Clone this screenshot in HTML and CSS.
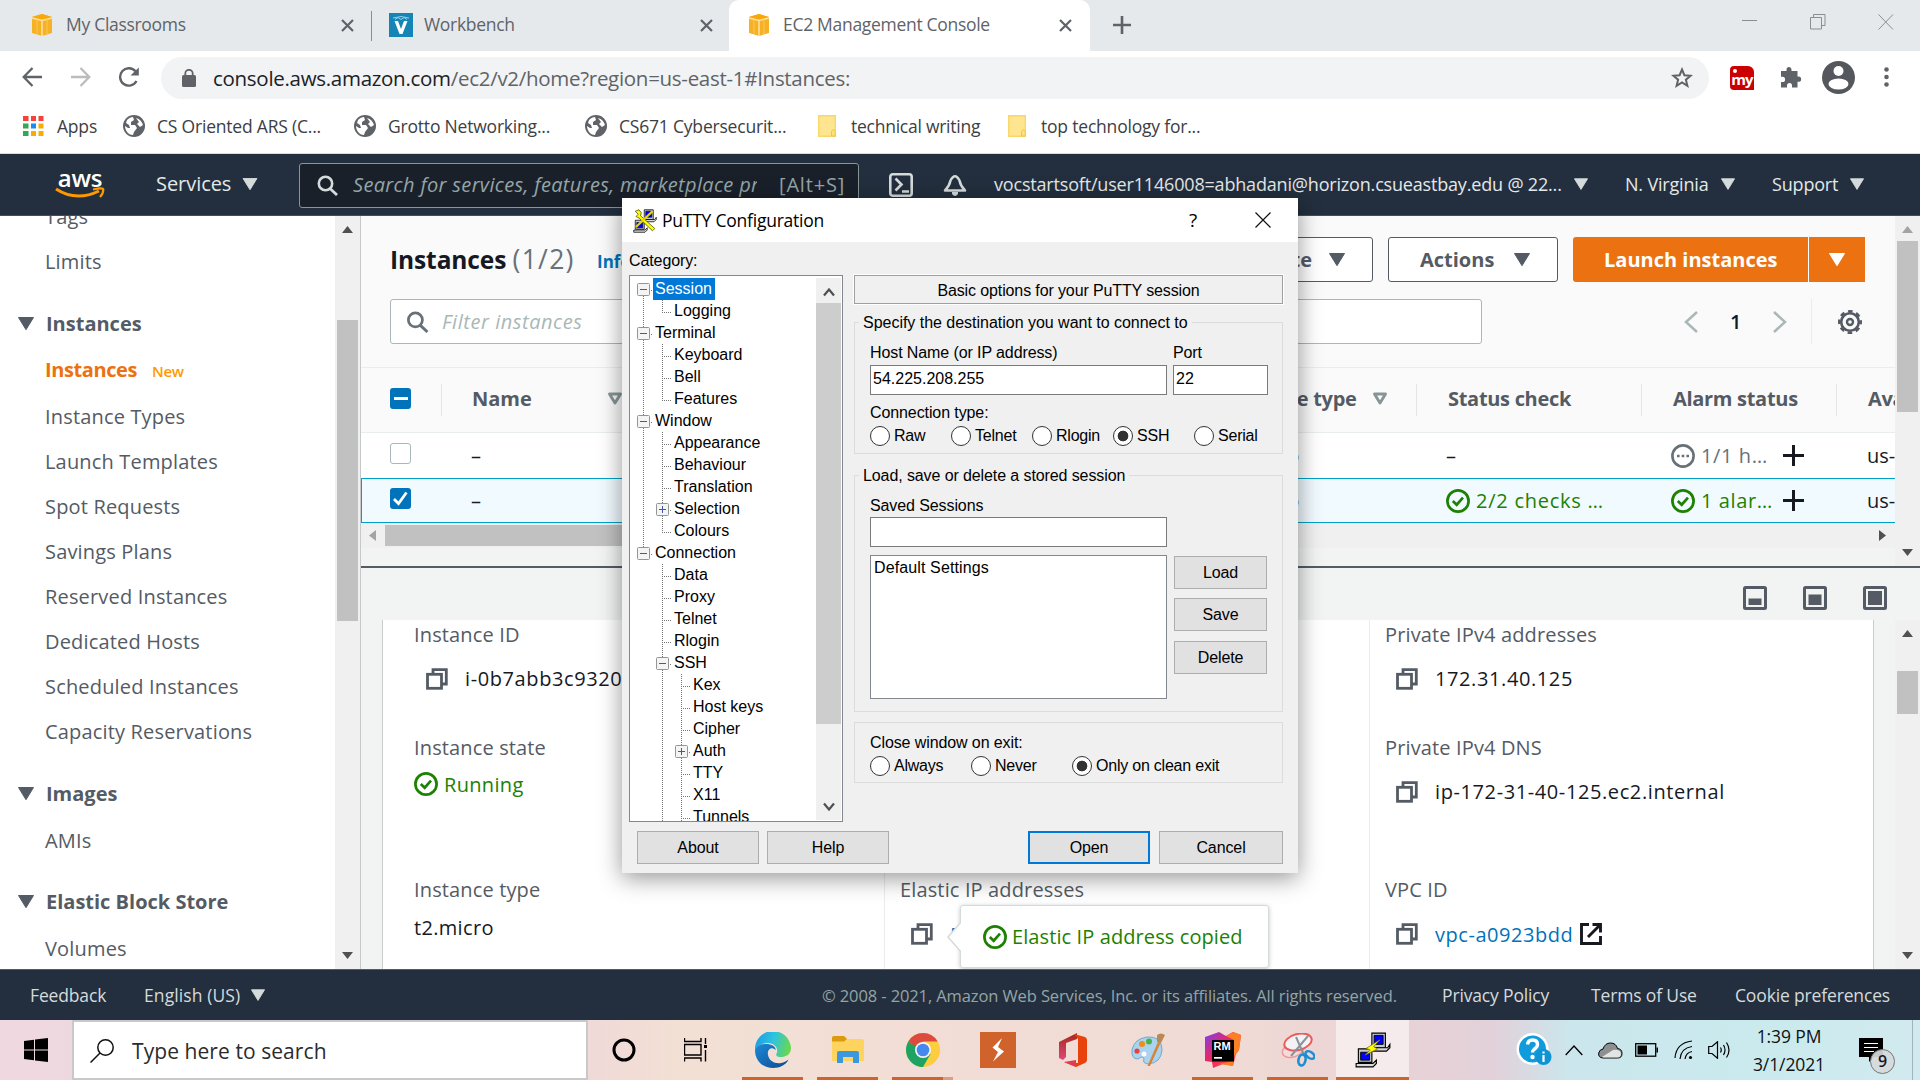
FILE: index.html
```html
<!DOCTYPE html>
<html lang="en">
<head>
<meta charset="utf-8">
<title>EC2 Management Console</title>
<link rel="stylesheet" href="styles.css">
</head>
<body>
<svg width="0" height="0" class="defs">
  <defs>
    <linearGradient id="edgeA" x1="0" y1="0.3" x2="1" y2="0.5"><stop offset="0" stop-color="#1b9de2"/><stop offset=".5" stop-color="#2fc3e0"/><stop offset="1" stop-color="#6bd84a"/></linearGradient>
    <linearGradient id="edgeB" x1="0" y1="0" x2="1" y2="1"><stop offset="0" stop-color="#1b8ad6"/><stop offset="1" stop-color="#0f4a94"/></linearGradient>
    <linearGradient id="office" x1="0" y1="0" x2="0" y2="1"><stop offset="0" stop-color="#a52a1a"/><stop offset="1" stop-color="#e0467c"/></linearGradient>
    <linearGradient id="rm" x1="0" y1="0" x2="1" y2="1"><stop offset="0" stop-color="#7a3ff0"/><stop offset=".45" stop-color="#f0255e"/><stop offset="1" stop-color="#ff5a3c"/></linearGradient>
  </defs>
  <symbol id="cube" viewBox="0 0 22 22"><path d="M11 0L21 3V19L11 22L1 19V3Z" fill="#f6b124"/><path d="M1 3L11 0L21 3L11 6Z" fill="#f9a80c"/><path d="M1 4L11 6.500L21 4M11 6.500V22" stroke="#ffe3a0" stroke-width="1.500" fill="none"/><path d="M6 5V20M16 5V20" stroke="#fbc85a" stroke-width="1" fill="none"/></symbol>
  <symbol id="x" viewBox="0 0 13 13"><path d="M1 1L12 12M12 1L1 12" stroke="#5f6368" stroke-width="2.200"/></symbol>
  <symbol id="globe" viewBox="0 0 22 22"><circle cx="11" cy="11" r="11" fill="#5f6368"/><path d="M4 5C6 3 8 2 10 2L11 5L8 7V10L12 10L14 13L11 17L10 20C5 20 2 15 2 11L5 13L7 13L6 10L3 8ZM13 3C17 4 19 7 20 10L17 12L14 9L16 7Z" fill="#fff"/></symbol>
  <symbol id="folder" viewBox="0 0 18 22"><path d="M.7.7H17.3V21.3H.7Z" fill="#ffe58f" stroke="#f8d86a" stroke-width="1.4"/><path d="M13.5 21V16.500Q15.500 13 17.300 16V21Z" fill="#ffe07a" stroke="#f0c63f"/></symbol>
  <symbol id="mag" viewBox="0 0 21 21"><circle cx="8.500" cy="8.500" r="6.700" fill="none" stroke="currentColor" stroke-width="2.600"/><path d="M13 13.500L20 20" stroke="currentColor" stroke-width="2.800"/></symbol>
  <symbol id="down" viewBox="0 0 16 13"><path d="M.5 0.500H15.500L8 12.700Z" fill="currentColor" stroke="currentColor" stroke-linejoin="round"/></symbol>
  <symbol id="sort" viewBox="0 0 16 13"><path d="M2.500 2H13.500L8 11Z" fill="none" stroke="#879596" stroke-width="2.900" stroke-linejoin="round"/></symbol>
  <symbol id="ok" viewBox="0 0 24 24"><circle cx="12" cy="12" r="10.600" fill="none" stroke="#1d8102" stroke-width="2.700"/><path d="M6.800 12L10.700 15.700L17 8.700" fill="none" stroke="#1d8102" stroke-width="2.700"/></symbol>
  <symbol id="wait" viewBox="0 0 24 24"><circle cx="12" cy="12" r="10.600" fill="none" stroke="#687078" stroke-width="2.600"/><path d="M6 12H8.600M10.700 12H13.300M15.400 12H18" stroke="#687078" stroke-width="2.600"/></symbol>
  <symbol id="plus" viewBox="0 0 21 21"><path d="M10.500 0V21M0 10.500H21" stroke="#16191f" stroke-width="3"/></symbol>
  <symbol id="copy" viewBox="0 0 22 22"><path d="M7 6V1.700H20.300V16H16" fill="none" stroke="#545b64" stroke-width="2.800"/><rect x="1.500" y="6.300" width="14" height="14" fill="#fff" stroke="#545b64" stroke-width="2.800"/></symbol>
  <symbol id="up-s" viewBox="0 0 11 7"><path d="M0 7L5.500 0L11 7Z" fill="currentColor"/></symbol>
  <symbol id="dn-s" viewBox="0 0 11 7"><path d="M0 0L5.500 7L11 0Z" fill="currentColor"/></symbol>
  <symbol id="minus-box" viewBox="0 0 13 13"><rect x=".5" y=".5" width="12" height="12" rx="1" fill="#f4f4f4" stroke="#959595"/><path d="M3 6.500H10" stroke="#3f5aa5"/></symbol>
  <symbol id="plus-box" viewBox="0 0 13 13"><rect x=".5" y=".5" width="12" height="12" rx="1" fill="#f4f4f4" stroke="#959595"/><path d="M3 6.500H10M6.500 3V10" stroke="#3f5aa5"/></symbol>
  <symbol id="terminals" viewBox="0 0 32 32">
    <path d="M15 1H27V14H15Z" fill="#c8c8c8" stroke="#000"/><path d="M17 3H25V11H17Z" fill="#00f" stroke="#000" stroke-width=".8"/><path d="M14 14H29L31 11V14L28 17H14Z" fill="#d8d8d8" stroke="#000"/>
    <path d="M3 15H15V27H3Z" fill="#c8c8c8" stroke="#000"/><path d="M5 18H13V25H5Z" fill="#00f" stroke="#000" stroke-width=".8"/><path d="M1 28H16L19 25V28L16 31H1Z" fill="#d8d8d8" stroke="#000"/>
  </symbol>
</svg>

<header class="tabs">
  <div class="tab tab-first"><svg class="i22"><use href="#cube"/></svg><span class="tab-t">My Classrooms</span><svg class="i13"><use href="#x"/></svg></div>
  <div class="tab tab-second"><svg width="24" height="24" viewBox="0 0 24 24"><rect width="24" height="24" fill="#1585b5"/><path d="M5.500 8H9L12 16L15 8H18.500L13.500 21H10.500Z" fill="#fff"/><path d="M4 5Q12 2 20 5M6 6.500L9 4.500L12 6.500L15 4.500L18 6.500" fill="none" stroke="#8fd0ec"/></svg><span class="tab-t">Workbench</span><svg class="i13"><use href="#x"/></svg></div>
  <div class="tab tab-active"><svg class="i22"><use href="#cube"/></svg><span class="tab-t">EC2 Management Console</span><svg class="i13"><use href="#x"/></svg></div>
  <svg class="newtab" width="18" height="18" viewBox="0 0 18 18"><path d="M9 0V18M0 9H18" stroke="#5f6368" stroke-width="2.600"/></svg>
  <div class="winctl">
    <svg width="16" height="16" viewBox="0 0 16 16"><path d="M0 6.500H15" stroke="#8b8d8f"/></svg>
    <svg width="16" height="16" viewBox="0 0 16 16"><path d="M.5 3.500H11.500V15H.5ZM3.500 3V.5H15V11.500H12" fill="none" stroke="#8b8d8f"/></svg>
    <svg width="16" height="16" viewBox="0 0 16 16"><path d="M.5 .5L15 15.500M15 .5L.5 15.500" stroke="#8b8d8f"/></svg>
  </div>
</header>

<div class="toolbar">
  <svg width="21" height="20" viewBox="0 0 21 20"><path d="M20 10H2M10.500 1L1.700 10L10.500 19" fill="none" stroke="#5f6368" stroke-width="2.300"/></svg>
  <svg width="21" height="20" viewBox="0 0 21 20"><path d="M1 10H19M10.500 1L19.300 10L10.500 19" fill="none" stroke="#babcbe" stroke-width="2.300"/></svg>
  <svg width="22" height="20" viewBox="0 0 22 20"><path d="M18.500 14A8.700 8.700 0 1 1 17.500 4.300" fill="none" stroke="#5f6368" stroke-width="2.400"/><path d="M20.800 .5V8.500H12.500Z" fill="#5f6368"/></svg>
  <div class="omni">
    <svg width="14" height="18" viewBox="0 0 14 18"><rect y="6" width="14" height="12" rx="1.500" fill="#5f6368"/><path d="M3.300 7V4.500A3.700 3.700 0 0 1 10.700 4.500V7" fill="none" stroke="#5f6368" stroke-width="1.800"/></svg>
    <span class="url"><b>console.aws.amazon.com</b>/ec2/v2/home?region=us-east-1#Instances:</span>
    <svg width="22" height="21" viewBox="0 0 22 21"><path d="M11 2.500L13.400 8.200L19.700 8.700L14.900 12.700L16.400 18.800L11 15.500L5.600 18.800L7.100 12.700L2.300 8.700L8.600 8.200Z" fill="none" stroke="#5f6368" stroke-width="2"/></svg>
  </div>
  <div class="ext"><span>my</span></div>
  <svg class="puzzle" width="22" height="22" viewBox="0 0 22 22"><path d="M1 5H6.500V3.500A2.500 2.500 0 0 1 11.500 3.500V5H17.500V10.500H18.500A2.600 2.600 0 0 1 18.500 15.800H17.500V21.500H12V19.500A2.500 2.500 0 0 0 7 19.500V21.500H1V16H2.500A2.600 2.600 0 0 0 2.500 10.800H1Z" fill="#5f6368"/></svg>
  <svg width="33" height="33" viewBox="0 0 33 33"><circle cx="16.500" cy="16.500" r="16.500" fill="#54585d"/><circle cx="16.500" cy="10" r="5" fill="#fff"/><ellipse cx="16.500" cy="23" rx="10" ry="5.500" fill="#fff"/></svg>
  <svg class="dots" width="5" height="20" viewBox="0 0 5 20"><circle cx="2.500" cy="2.500" r="2.300" fill="#5f6368"/><circle cx="2.500" cy="10" r="2.300" fill="#5f6368"/><circle cx="2.500" cy="17.500" r="2.300" fill="#5f6368"/></svg>
</div>

<nav class="marks">
  <div class="mk mk-apps"><svg width="21" height="20" viewBox="0 0 21 20"><path d="M0 0H5.500V5H0ZM8 0H13V5H8ZM15.500 0H20.500V5H15.500Z" fill="#f4433a"/><path d="M0 7.500H5.500V12.500H0ZM0 15H5.500V20H0Z" fill="#34a853"/><path d="M8 7.500H13V12.500H8Z" fill="#1a8cf0"/><path d="M15.500 7.500H20.500V12.500H15.500ZM8 15H13V20H8ZM15.500 15H20.500V20H15.500Z" fill="#f9ab00"/></svg>Apps</div>
  <div class="mk"><svg class="i22"><use href="#globe"/></svg>CS Oriented ARS (C...</div>
  <div class="mk"><svg class="i22"><use href="#globe"/></svg>Grotto Networking...</div>
  <div class="mk"><svg class="i22"><use href="#globe"/></svg>CS671 Cybersecurit...</div>
  <div class="mk mk-f1"><svg width="18" height="22"><use href="#folder"/></svg>technical writing</div>
  <div class="mk mk-f2"><svg width="18" height="22"><use href="#folder"/></svg>top technology for...</div>
</nav>

<header class="aws">
  <div class="logo"><span>aws</span><svg width="50" height="13" viewBox="0 0 50 13"><path d="M1 2Q21 15 44 4" fill="none" stroke="#f90" stroke-width="3"/><path d="M38 2.500Q48 .5 48.300 2.200Q48.500 6 45 10" fill="none" stroke="#f90" stroke-width="2.200"/></svg></div>
  <div class="svc">Services<svg width="16" height="12"><use href="#down"/></svg></div>
  <div class="search"><svg width="21" height="21"><use href="#mag"/></svg><em>Search for services, features, marketplace products</em><span>[Alt+S]</span></div>
  <svg class="cli" width="24" height="24" viewBox="0 0 24 24"><rect x="1.300" y="1.300" width="21.400" height="21.400" rx="2.500" fill="none" stroke="#d5dbdb" stroke-width="2.600"/><path d="M6.500 5.500L12.500 11.500L6.500 17.500M13 18.500H20" fill="none" stroke="#d5dbdb" stroke-width="2.600"/></svg>
  <svg class="bell" width="24" height="24" viewBox="0 0 24 24"><path d="M2 17.500Q6.500 13 7.500 7.500Q12-1 16.500 7.500Q17.500 13 22 17.500Z" fill="none" stroke="#d5dbdb" stroke-width="2.500" stroke-linejoin="round"/><path d="M9 19H15V21Q12 25 9 21Z" fill="#d5dbdb"/></svg>
  <div class="acct">vocstartsoft/user1146008=abhadani@horizon.csueastbay.edu @ 22...<svg width="14" height="12"><use href="#down"/></svg></div>
  <div class="region">N. Virginia<svg width="14" height="12"><use href="#down"/></svg></div>
  <div class="support">Support<svg width="14" height="12"><use href="#down"/></svg></div>
</header>

<div class="content">
  <aside>
    <ul class="side">
      <li>Tags</li><li>Limits</li>
      <li class="head"><svg width="16" height="13"><use href="#down"/></svg>Instances</li>
      <li class="cur">Instances<small>New</small></li>
      <li>Instance Types</li><li>Launch Templates</li><li>Spot Requests</li><li>Savings Plans</li><li>Reserved Instances</li><li>Dedicated Hosts</li><li>Scheduled Instances</li><li>Capacity Reservations</li>
      <li class="head"><svg width="16" height="13"><use href="#down"/></svg>Images</li>
      <li class="ami">AMIs</li>
      <li class="head"><svg width="16" height="13"><use href="#down"/></svg>Elastic Block Store</li>
      <li class="vol">Volumes</li>
    </ul>
    <div class="sb sb-side"><svg width="11" height="7"><use href="#up-s"/></svg><i></i><svg width="11" height="7"><use href="#dn-s"/></svg></div>
  </aside>
  <main>
    <section class="upper">
      <div class="list">
        <div class="row-title">
          <h1>Instances <span>(1/2)</span></h1><a class="info">Info</a>
          <div class="btn btn-state">Instance state<svg width="16" height="13"><use href="#down"/></svg></div>
          <div class="btn btn-act">Actions<svg width="16" height="13"><use href="#down"/></svg></div>
          <div class="btn-launch"><span>Launch instances</span><b><svg width="16" height="13"><use href="#down"/></svg></b></div>
        </div>
        <div class="row-filter">
          <div class="filter"><svg width="23" height="22"><use href="#mag"/></svg><em>Filter instances</em></div>
          <svg class="prev" width="14" height="22" viewBox="0 0 14 22"><path d="M13 1L2 11L13 21" fill="none" stroke="#aab7b8" stroke-width="2.500"/></svg>
          <span class="page">1</span>
          <svg width="14" height="22" viewBox="0 0 14 22"><path d="M1 1L12 11L1 21" fill="none" stroke="#aab7b8" stroke-width="2.500"/></svg>
          <div class="gear"><svg width="24" height="24" viewBox="0 0 24 24"><circle cx="12" cy="12" r="8.800" fill="none" stroke="#545b64" stroke-width="2.600"/><circle cx="12" cy="12" r="10.700" fill="none" stroke="#545b64" stroke-width="2.600" stroke-dasharray="4.600 3.800" stroke-dashoffset="2.300"/><circle cx="12" cy="12" r="3" fill="none" stroke="#545b64" stroke-width="2.400"/></svg></div>
        </div>
        <div class="tr th">
          <div class="c0"><span class="ck ck-mix"></span></div>
          <div class="c1">Name<svg width="16" height="13"><use href="#sort"/></svg></div>
          <div class="c2"></div>
          <div class="c3">Instance type<svg width="16" height="13"><use href="#sort"/></svg></div>
          <div class="c4">Status check</div>
          <div class="c5">Alarm status</div>
          <div class="c6">Availability Zone</div>
        </div>
        <div class="tr">
          <div class="c0"><span class="ck"></span></div>
          <div class="c1">–</div><div class="c2"></div>
          <div class="c3">t2.micro</div>
          <div class="c4">–</div>
          <div class="c5"><svg class="i24"><use href="#wait"/></svg><span class="al grey">1/1 h…</span><svg class="i21"><use href="#plus"/></svg></div>
          <div class="c6">us-east-1d</div>
        </div>
        <div class="tr sel">
          <div class="c0"><span class="ck ck-on"><svg width="21" height="21" viewBox="0 0 21 21"><path d="M4 11L8.500 15.500L16.500 4.500" fill="none" stroke="#fff" stroke-width="2.800"/></svg></span></div>
          <div class="c1">–</div><div class="c2"></div>
          <div class="c3">t2.micro</div>
          <div class="c4 green"><svg class="i24"><use href="#ok"/></svg><span>2/2 checks …</span></div>
          <div class="c5 green"><svg class="i24"><use href="#ok"/></svg><span class="al">1 alar…</span><svg class="i21"><use href="#plus"/></svg></div>
          <div class="c6">us-east-1d</div>
        </div>
        <div class="hsb"><svg width="7" height="11" viewBox="0 0 7 11"><path d="M7 0L0 5.500L7 11Z" fill="#a3a3a3"/></svg><i></i><svg width="7" height="11" viewBox="0 0 7 11"><path d="M0 0L7 5.500L0 11Z" fill="#505050"/></svg></div>
      </div>
      <div class="sb sb-up"><svg class="dim" width="11" height="7"><use href="#up-s"/></svg><i></i><svg width="11" height="7"><use href="#dn-s"/></svg></div>
    </section>
    <div class="split">
      <svg class="i24" viewBox="0 0 24 24"><rect x="1.500" y="1.500" width="21" height="21" rx="1" fill="none" stroke="#545b64" stroke-width="3"/><rect x="5.500" y="12.500" width="13" height="6.500" fill="#545b64"/></svg>
      <svg class="i24" viewBox="0 0 24 24"><rect x="1.500" y="1.500" width="21" height="21" rx="1" fill="none" stroke="#545b64" stroke-width="3"/><rect x="5.500" y="8.500" width="13" height="10.500" fill="#545b64"/></svg>
      <svg class="i24" viewBox="0 0 24 24"><rect x="1.500" y="1.500" width="21" height="21" rx="1" fill="none" stroke="#545b64" stroke-width="3"/><rect x="5" y="5" width="14" height="14" fill="#545b64"/></svg>
    </div>
    <section class="lower">
      <div class="panel">
        <div class="col col1">
          <div class="f1"><label>Instance ID</label><p class="cp"><svg class="i22"><use href="#copy"/></svg><span class="num">i-0b7abb3c9320</span></p></div>
          <div class="f2"><label>Instance state</label><p class="run"><svg class="i24"><use href="#ok"/></svg>Running</p></div>
          <div class="f3"><label>Instance type</label><p class="plain">t2.micro</p></div>
        </div>
        <div class="col col2">
          <div class="f1"></div><div class="f2"></div>
          <div class="f3"><label>Elastic IP addresses</label><p class="cp"><svg class="i22"><use href="#copy"/></svg><a>54.225.208.255</a></p></div>
          <div class="tip"><svg class="tip-arrow" width="14" height="30" viewBox="0 0 14 30"><path d="M14 0L1 15L14 30" fill="#fff" stroke="#d5dbdb" stroke-width="1.500"/></svg><svg class="i24"><use href="#ok"/></svg>Elastic IP address copied</div>
        </div>
        <div class="col col3">
          <div class="f1"><label>Private IPv4 addresses</label><p class="cp"><svg class="i22"><use href="#copy"/></svg><span class="num">172.31.40.125</span></p></div>
          <div class="f2"><label>Private IPv4 DNS</label><p class="cp"><svg class="i22"><use href="#copy"/></svg><span class="num">ip-172-31-40-125.ec2.internal</span></p></div>
          <div class="f3"><label>VPC ID</label><p class="cp"><svg class="i22"><use href="#copy"/></svg><a class="vpc">vpc-a0923bdd</a><svg class="i22 out" viewBox="0 0 22 22"><path d="M9 1.500H1.500V20.500H20.500V13" fill="none" stroke="#16191f" stroke-width="2.900"/><path d="M8 14L20 2M12.500 1.500H20.500V9.500" fill="none" stroke="#16191f" stroke-width="2.900"/></svg></p></div>
        </div>
      </div>
      <div class="sb sb-low"><svg width="11" height="7"><use href="#up-s"/></svg><i></i><svg width="11" height="7"><use href="#dn-s"/></svg></div>
    </section>
  </main>
</div>

<footer class="foot">
  <span class="fb">Feedback</span><span class="lang">English (US)<svg width="14" height="12"><use href="#down"/></svg></span>
  <span class="copyr">© 2008 - 2021, Amazon Web Services, Inc. or its affiliates. All rights reserved.</span>
  <span class="pp">Privacy Policy</span><span class="tu">Terms of Use</span><span>Cookie preferences</span>
</footer>

<div class="task">
  <div class="start"><svg width="24" height="24" viewBox="0 0 24 24"><path d="M0 3L10 1.700V11.500H0ZM11 1.500L24 0V11.500H11ZM0 12.500H10V22.300L0 21ZM11 12.500H24V24L11 22.400Z"/></svg></div>
  <div class="tsearch"><svg width="24" height="24" viewBox="0 0 24 24"><circle cx="15.500" cy="8.500" r="7.700" fill="none" stroke="#111" stroke-width="1.500"/><path d="M10 14L.5 23.500" stroke="#111" stroke-width="1.500"/></svg>Type here to search</div>
  <div class="ti cort"><svg width="24" height="24" viewBox="0 0 24 24"><circle cx="12" cy="12" r="10" fill="none" stroke="#000" stroke-width="3"/></svg></div>
  <div class="ti tview"><svg width="24" height="24" viewBox="0 0 24 24"><path d="M.5 0V3.500H17V0M.5 6.500H17V17H.5ZM.5 23.500V20H17V23.500M21.500 0V6M21.500 12V23.500" fill="none" stroke="#000" stroke-width="1.400"/><rect x="20" y="7" width="3" height="3"/></svg></div>
  <div class="ti on"><svg width="36" height="36" viewBox="0 0 36 36"><path d="M0 18A18 18 0 0 1 36 16C36 23 30 25 26 25C22 25 20.500 23.500 21.500 21.500C24 17 20 11 13 11C7 11 2 14 0 18Z" fill="url(#edgeA)"/><path d="M0 18C2 13 8 11.500 13 12C19 13 21 16 20.500 18C16 14 12 18 13 23C14 29 20 32 26 31C29 30.500 31 29.500 33.500 27.500C31 33 25 36 18 36C8 36 0 29 0 18Z" fill="url(#edgeB)"/></svg></div>
  <div class="ti on"><svg width="32" height="28" viewBox="0 0 32 28"><path d="M0 2Q0 0 2 0H12L15 3H30Q32 3 32 5V25H0Z" fill="#ffd45e"/><path d="M0 2Q0 0 2 0H12L15 3L12 5.500H0Z" fill="#dc9a0e"/><path d="M5 26V17Q5 15 7 15H25Q27 15 27 17V27H21V21H11V27H5Z" fill="#3c98dc"/></svg></div>
  <div class="ti on chr"><svg width="34" height="34" viewBox="0 0 34 34"><circle cx="17" cy="17" r="17" fill="#fbcd3f"/><path d="M17 17L2.300 8.500A17 17 0 0 0 17 34L24.500 21Z" fill="#1ea362"/><path d="M17 0A17 17 0 0 1 31.700 8.500H17L10 14L2.300 8.500A17 17 0 0 1 17 0Z" fill="#dd4b3e"/><circle cx="17" cy="17" r="8" fill="#f4f4f4"/><circle cx="17" cy="17" r="6.300" fill="#4688f0"/></svg></div>
  <div class="ti"><svg width="36" height="36" viewBox="0 0 36 36"><rect width="36" height="36" fill="#d0632c"/><path d="M22 6L12.500 15.500L18 20L13 29.500L24 19.500L18 15Z" fill="#fff"/></svg></div>
  <div class="ti"><svg width="28" height="34" viewBox="0 0 28 34"><path d="M0 9L18 0V6L7 10V24L4 27L0 25Z" fill="url(#office)"/><path d="M15 1L26 4Q28 5 28 7V27Q28 29 26 30L17 34L5 29L19 30V6Z" fill="#e8430c"/><path d="M5 29L17 27V34Z" fill="#e43a54"/></svg></div>
  <div class="ti"><svg width="36" height="36" viewBox="0 0 36 36"><path d="M17 5Q32 4 32 18Q31 31 18 32Q12 31 14 27Q13 23 8 27Q1 27 2 18Q4 7 17 5Z" fill="#a9d3ee" stroke="#6fa9d2"/><circle cx="12" cy="12" r="3" fill="#f08c1e"/><circle cx="19" cy="9.500" r="3" fill="#49b04a"/><circle cx="7" cy="19" r="2.600" fill="#e2443c"/><circle cx="14" cy="22" r="2.500" fill="#fff"/><path d="M28 10L30.500 11L20 34L17.500 34Z" fill="#d98333"/><path d="M27 3Q31 0 35 3L31 11L27 10Z" fill="#b98a52"/></svg></div>
  <div class="ti on"><svg width="36" height="36" viewBox="0 0 36 36"><path d="M0 5L14 0L21 4L28 0L36 3L34 18L31 22L28 34L18 32L8 36L7 30L0 29Z" fill="url(#rm)"/><path d="M21 4L28 0L36 3L34 18L29 24L28 34L14 32L29 29V8Z" fill="#fd7f23"/><rect x="7" y="8" width="22" height="21.500" fill="#000"/><text x="8.500" y="18" class="rmt">RM</text><rect x="9" y="25" width="8" height="1.700" fill="#fff"/></svg></div>
  <div class="ti on"><svg width="34" height="34" viewBox="0 0 34 34"><ellipse cx="12" cy="17" rx="11" ry="7" transform="rotate(-20 12 17)" fill="#f5dcdc" stroke="#ef9a9a" stroke-width="1.500"/><ellipse cx="17" cy="9" rx="14" ry="8" transform="rotate(-15 17 9)" fill="#f3f3f6" stroke="#ee5a5a" stroke-width="2"/><path d="M15 4L23 22M27 3L10 23" stroke="#8c9399" stroke-width="2"/><ellipse cx="21" cy="27" rx="3.500" ry="5.500" transform="rotate(12 21 27)" fill="none" stroke="#1f8dd0" stroke-width="2.600"/><ellipse cx="29" cy="22" rx="3" ry="5" transform="rotate(-55 29 22)" fill="none" stroke="#1f8dd0" stroke-width="2.600"/></svg></div>
  <div class="ti on tile"><svg width="36" height="36" viewBox="0 0 32 32"><use href="#terminals" width="32" height="32"/><path d="M22 7L10 14.500L13.500 16L9 20.500L20 15L16.500 13Z" fill="#ff0" stroke="#807800" stroke-width=".7"/></svg></div>
  <div class="tray">
    <svg width="36" height="34" viewBox="0 0 36 34"><circle cx="16.500" cy="16" r="16" fill="#fff"/><circle cx="16.500" cy="16" r="13.500" fill="#0f9bdc"/><path d="M11.500 11.500Q12 7 16.500 7Q21.500 7 21.500 11.500Q21.500 14 18 16.500Q16.500 17.800 16.500 19.500" fill="none" stroke="#fff" stroke-width="3.400"/><circle cx="16.500" cy="24" r="2.200" fill="#fff"/><circle cx="27.500" cy="24" r="8" fill="#0e93d3"/><path d="M27.500 22V29M27.500 18.500V20.500" stroke="#fff" stroke-width="2.200"/></svg>
    <svg class="t-chev" width="18" height="12" viewBox="0 0 18 12"><path d="M.7 11L9 2L17.300 11" fill="none" stroke="#000" stroke-width="1.300"/></svg>
    <svg class="t-cloud" width="25" height="17" viewBox="0 0 25 17"><path d="M5 16Q0 15.500 .7 11Q1.500 7.500 5 7Q7 1 12.500 1Q18 1 19.500 6.500Q24 7 24 11.500Q24 16 19.500 16Z" fill="#8d8f90" stroke="#000"/><path d="M4 15L15 8Q22 7 23 11.500Q23 15.500 19.500 15.500H5Z" fill="#e3e5e5"/></svg>
    <svg class="t-bat" width="23" height="14" viewBox="0 0 23 14"><rect x=".7" y=".7" width="20" height="12.500" fill="none" stroke="#000" stroke-width="1.300"/><rect x="2.500" y="2.500" width="9.500" height="9"/><rect x="21.500" y="4.500" width="1.500" height="5"/></svg>
    <svg class="t-wifi" width="20" height="20" viewBox="0 0 20 20"><path d="M1 18Q2 3 18 1M6 19Q7 8 18 6.500M11 19Q12 12.500 18 11.500" fill="none" stroke="#000" stroke-width="1.200"/><circle cx="16.500" cy="17.500" r="1.600"/></svg>
    <svg class="t-vol" width="23" height="18" viewBox="0 0 23 18"><path d="M.7 5.500H4L9.500 .7V17.300L4 12.500H.7Z" fill="none" stroke="#000" stroke-width="1.200"/><path d="M12.500 6.500Q14 9 12.500 11.500M15.500 4Q18.500 9 15.500 14M18.500 1.500Q23.500 9 18.500 16.500" fill="none" stroke="#000" stroke-width="1.200"/></svg>
    <div class="clock"><span>1:39 PM</span><span>3/1/2021</span></div>
    <div class="note"><svg width="24" height="24" viewBox="0 0 24 24"><path d="M0 0H24V19H15L10 24V19H0Z"/><path d="M5 5.500H19M5 9.500H19M5 13.500H15" stroke="#fff" stroke-width="1.200"/></svg><b>9</b></div>
  </div>
</div>

<div class="dialog">
  <div class="d-title">
    <svg width="24" height="24" viewBox="0 0 32 32"><use href="#terminals" width="32" height="32"/><path d="M3 3L8 1L11 5L10 9L29 26L26 29L8 12L4 10L7 7Z" fill="#ff0" stroke="#4a4600"/><path d="M26 3L4 24" stroke="#e8d800" stroke-width="3"/></svg>
    <span>PuTTY Configuration</span><b>?</b>
    <svg width="16" height="16" viewBox="0 0 16 16"><path d="M.5 .5L15.500 15.500M15.500 .5L.5 15.500" stroke="#111" stroke-width="1.200"/></svg>
  </div>
  <div class="d-cat">Category:</div>
  <div class="d-body">
    <div class="tree">
      <ul>
        <li><i class="d h"><svg><use href="#minus-box"/></svg></i><span class="hl">Session</span></li>
        <li><i class="v"></i><i class="t h"></i><span>Logging</span></li>
        <li><i class="v h"><svg><use href="#minus-box"/></svg></i><span>Terminal</span></li>
        <li><i class="v"></i><i class="v h"></i><span>Keyboard</span></li>
        <li><i class="v"></i><i class="v h"></i><span>Bell</span></li>
        <li><i class="v"></i><i class="t h"></i><span>Features</span></li>
        <li><i class="v h"><svg><use href="#minus-box"/></svg></i><span>Window</span></li>
        <li><i class="v"></i><i class="v h"></i><span>Appearance</span></li>
        <li><i class="v"></i><i class="v h"></i><span>Behaviour</span></li>
        <li><i class="v"></i><i class="v h"></i><span>Translation</span></li>
        <li><i class="v"></i><i class="v h"><svg><use href="#plus-box"/></svg></i><span>Selection</span></li>
        <li><i class="v"></i><i class="t h"></i><span>Colours</span></li>
        <li><i class="t h"><svg><use href="#minus-box"/></svg></i><span>Connection</span></li>
        <li><i></i><i class="v h"></i><span>Data</span></li>
        <li><i></i><i class="v h"></i><span>Proxy</span></li>
        <li><i></i><i class="v h"></i><span>Telnet</span></li>
        <li><i></i><i class="v h"></i><span>Rlogin</span></li>
        <li><i></i><i class="v h"><svg><use href="#minus-box"/></svg></i><span>SSH</span></li>
        <li><i></i><i class="v"></i><i class="v h"></i><span>Kex</span></li>
        <li><i></i><i class="v"></i><i class="v h"></i><span>Host keys</span></li>
        <li><i></i><i class="v"></i><i class="v h"></i><span>Cipher</span></li>
        <li><i></i><i class="v"></i><i class="v h"><svg><use href="#plus-box"/></svg></i><span>Auth</span></li>
        <li><i></i><i class="v"></i><i class="v h"></i><span>TTY</span></li>
        <li><i></i><i class="v"></i><i class="v h"></i><span>X11</span></li>
        <li><i></i><i class="v"></i><i class="v h"></i><span>Tunnels</span></li>
      </ul>
      <div class="tsb"><svg width="12" height="9" viewBox="0 0 12 9"><path d="M1 7.500L6 1.500L11 7.500" fill="none" stroke="#505050" stroke-width="2.200"/></svg><i></i><svg width="12" height="9" viewBox="0 0 12 9"><path d="M1 1.500L6 7.500L11 1.500" fill="none" stroke="#505050" stroke-width="2.200"/></svg></div>
    </div>
    <div class="opts">
      <div class="banner">Basic options for your PuTTY session</div>
      <fieldset class="g1"><legend>Specify the destination you want to connect to</legend>
        <div class="pair"><div class="host"><label>Host Name (or IP address)</label><div class="inp">54.225.208.255</div></div><div class="port"><label>Port</label><div class="inp">22</div></div></div>
        <label class="ct">Connection type:</label>
        <div class="radios"><span class="r"><i></i>Raw</span><span class="r"><i></i>Telnet</span><span class="r"><i></i>Rlogin</span><span class="r"><i class="on"></i>SSH</span><span class="r"><i></i>Serial</span></div>
      </fieldset>
      <fieldset class="g2"><legend>Load, save or delete a stored session</legend>
        <label>Saved Sessions</label>
        <div class="inp inp-s"></div>
        <div class="pair"><div class="lst">Default Settings</div><div class="btns"><button>Load</button><button>Save</button><button>Delete</button></div></div>
      </fieldset>
      <fieldset class="g3"><label>Close window on exit:</label>
        <div class="radios wide"><span class="r"><i></i>Always</span><span class="r"><i></i>Never</span><span class="r"><i class="on"></i>Only on clean exit</span></div>
      </fieldset>
    </div>
  </div>
  <div class="d-btns"><button>About</button><button>Help</button><button class="def">Open</button><button class="cancel">Cancel</button></div>
</div>
</body>
</html>
```
FILE: styles.css
```css
* { box-sizing: border-box; }
body { margin: 0; width: 1920px; height: 1080px; overflow: hidden; position: relative; background: #fff; font-family: "Open Sans", "Noto Sans", sans-serif; font-size: 20px; color: #16191f; }
svg { display: block; flex: none; }
ul, p, h1 { margin: 0; padding: 0; list-style: none; }
.defs { position: absolute; }
.i22 { width: 22px; height: 22px; }
.i13 { width: 13px; height: 13px; }
.i24 { width: 24px; height: 24px; }
.i21 { width: 21px; height: 21px; }

/* browser tabs */
.tabs { height: 51px; background: #e6e9ec; display: flex; align-items: center; font-size: 17.5px; letter-spacing: -.3px; color: #5f6368; }
.tab { display: flex; align-items: center; height: 51px; padding-bottom: 1px; }
.tab svg:last-child { margin-top: 1px; }
.tab-t { flex: 1; line-height: 48px; height: 50px; white-space: nowrap; }
.tab-first { width: 372px; padding: 0 18px 1px 31px; gap: 13px; position: relative; }
.tab-first::after { content: ""; position: absolute; right: 0; top: 11px; width: 1px; height: 30px; background: #8a8d91; }
.tab-second { width: 357px; padding: 0 16px 1px 17px; gap: 11px; }
.tab-active { width: 361px; padding: 0 18px 1px 19px; gap: 13px; background: #fff; border-radius: 10px 10px 0 0; }
.newtab { margin-left: 23px; margin-bottom: 1px; }
.winctl { margin-left: auto; display: flex; gap: 52px; margin-right: 26px; margin-bottom: 8px; }

/* navigation bar */
.toolbar { height: 52px; display: flex; align-items: center; padding-left: 22px; }
.toolbar > svg:nth-child(2) { margin-left: 27px; }
.toolbar > svg:nth-child(3) { margin-left: 27px; }
.omni { margin-left: 21px; margin-top: 1px; width: 1548px; height: 42px; border-radius: 21px; background: #f1f3f4; display: flex; align-items: center; padding: 0 16px 0 21px; }
.url { flex: 1; margin-left: 17px; font-size: 20.5px; letter-spacing: -.29px; color: #5f6368; }
.url b { font-weight: 400; color: #202124; }
.ext { margin-left: 21px; width: 24px; height: 24px; background: #c00; border-radius: 4px 6px 0 4px; color: #fff; font-weight: 700; font-size: 15px; line-height: 26px; text-align: center; letter-spacing: -.8px; position: relative; margin-top: 2px; }
.ext::before { content: ""; position: absolute; left: 3px; top: 3px; width: 4px; height: 4px; border-radius: 2px; background: #fff; }
.puzzle { margin-left: 26px; }
.puzzle + svg { margin-left: 20px; }
.dots { margin-left: 29px; }

/* bookmarks */
.marks { height: 51px; border-bottom: 1px solid #dadce0; display: flex; align-items: center; padding: 0 0 4px 23px; font-size: 17.5px; letter-spacing: -.2px; color: #3c4043; }
.mk { display: flex; align-items: center; gap: 12px; width: 231px; white-space: nowrap; line-height: 22px; }
.mk-apps { width: 100px; gap: 13px; }
.mk:nth-child(4) { width: 233px; }
.mk-f1 { width: 190px; gap: 15px; letter-spacing: -.25px; }
.mk-f2 { gap: 15px; }

/* AWS header */
.aws { height: 62px; background: #232f3e; border-bottom: 1px solid #4b4a5c; display: flex; align-items: center; color: #e4e8e8; font-size: 18px; }
.aws svg { color: #d5dbdb; }
.logo { margin-left: 55px; width: 50px; height: 36px; }
.logo span { display: block; font: 600 24px/22px "Open Sans", sans-serif; letter-spacing: -.3px; color: #fff; text-align: center; height: 20px; }
.svc { margin-left: 51px; width: 143px; display: flex; align-items: center; gap: 11px; font-size: 20px; font-weight: 500; letter-spacing: -.05px; padding-bottom: 2px; }
.search { width: 560px; height: 45px; border: 1px solid #879596; border-radius: 3px; background: #1a202a; display: flex; align-items: center; padding: 0 13px 0 17px; color: #95a5a6; margin-top: 1px; }
.search em { margin-left: 15px; width: 404px; overflow: hidden; white-space: nowrap; font-size: 20px; letter-spacing: .34px; }
.search em, .search span { margin-bottom: 2px; font-size: 20px; }
.search span { margin-left: auto; letter-spacing: .8px; }
.cli { margin-left: 30px; }
.bell { margin-left: 30px; }
.acct, .region, .support { display: flex; align-items: center; gap: 12px; white-space: nowrap; letter-spacing: -.18px; font-weight: 500; padding-bottom: 2px; }
.acct { margin-left: 27px; width: 631px; }
.region { width: 147px; }

/* page content */
.content { height: 753px; display: flex; overflow: hidden; }
aside { width: 361px; display: flex; border-right: 1px solid #c5c9ca; background: #fff; }
.side { width: 335px; margin-top: -22px; color: #545b64; flex: none; letter-spacing: .17px; }
.side li { height: 45px; padding-left: 45px; display: flex; align-items: center; white-space: nowrap; }
.side .head { margin-top: 17px; padding-left: 18px; gap: 12px; font-weight: 700; letter-spacing: 0; }
.side .cur { height: 48px; color: #ec7211; font-weight: 700; letter-spacing: -.4px; padding-bottom: 2px; }
.side small { font-size: 15px; color: #ff9900; margin: 3px 0 0 15px; letter-spacing: -.3px; font-weight: 600; }
.side .ami { height: 46px; padding-top: 2px; }
.side .vol { padding-top: 3px; }
.sb { width: 25px; background: #f0f0f0; display: flex; flex-direction: column; align-items: center; flex: none; color: #505050; padding: 10px 0; }
.sb i { width: 21px; background: #c1c1c1; }
.sb svg:last-child { margin-top: auto; }
.sb-side i { margin-top: 87px; height: 301px; }
.sb-up i { margin-top: 8px; height: 171px; }
.sb-low i { margin-top: 34px; height: 43px; }
.dim { color: #a3a3a3; }
main { flex: 1; display: flex; flex-direction: column; min-width: 0; }

.upper { height: 350px; display: flex; background: #f2f3f3; overflow: hidden; flex: none; }
.list { width: 1534px; background: #fafafa; height: 332px; overflow: hidden; }
.row-title { display: flex; align-items: center; height: 66px; padding: 21px 0 0 29px; }
h1 { font-size: 24.5px; font-weight: 700; letter-spacing: -.1px; width: 207px; white-space: nowrap; padding-bottom: 2px; }
h1 span { font-weight: 400; color: #687078; letter-spacing: 1.3px; font-size: 26.500px; }
.info { font-size: 17px; font-weight: 700; color: #0073bb; margin-top: 4px; width: 41px; }
.btn { height: 45px; border: 1px solid #545b64; border-radius: 3px; background: #fff; color: #545b64; font-weight: 700; display: flex; align-items: center; justify-content: space-between; padding: 0 27px 0 31px; }
.btn-state { width: 232px; margin-left: 503px; padding-left: 28px; }
.btn-act { width: 170px; margin-left: 15px; }
.btn-launch { margin-left: 15px; width: 292px; height: 45px; background: #ec7211; border-radius: 3px 0 0 3px; display: flex; color: #fff; font-weight: 700; }
.btn-launch span { width: 235px; line-height: 45px; padding-left: 31px; white-space: nowrap; }
.btn-launch b { flex: 1; border-left: 1px solid #fff; display: flex; align-items: center; justify-content: center; }
.row-filter { display: flex; align-items: center; margin-top: 17px; padding-left: 29px; height: 45px; }
.filter { width: 1092px; height: 45px; border: 1px solid #aab7b8; border-radius: 3px; background: #fff; display: flex; align-items: center; padding-left: 15px; gap: 13px; color: #687078; }
.filter em { color: #aab7b8; letter-spacing: .55px; }
.prev { margin-left: 202px; }
.page { margin: 0 32px; font-weight: 600; width: 11px; }
.gear { margin-left: 24px; height: 45px; border-left: 1px solid #eaeded; padding: 11px 0 0 26px; }

.tr { display: flex; align-items: center; height: 45px; background: #fff; width: 1700px; white-space: nowrap; }
.tr > div { display: flex; align-items: center; flex: none; }
.th { margin-top: 23px; height: 66px; background: #fafafa; border-top: 1px solid #eaeded; border-bottom: 1px solid #eaeded; font-weight: 700; color: #545b64; letter-spacing: -.3px; }
.th > div { height: 32px; border-right: 1px solid #e3e6e6; padding-bottom: 3px; }
.sel { background: #f1faff; border: 1px solid #00a1c9; height: 45px; }
.c0 { width: 81px; padding-left: 29px; }
.sel .c0 { padding-left: 28px; width: 80px; }
.c1 { width: 210px; padding-left: 29px; justify-content: space-between; padding-right: 28px; }
.th .c1 { padding-left: 30px; letter-spacing: 0; }
.c2 { width: 541px; }
.c3 { width: 224px; padding-left: 29px; justify-content: space-between; padding-right: 28px; }
.th .c3 { padding-left: 32px; }
.c4 { width: 225px; padding-left: 29px; gap: 6px; letter-spacing: .75px; }
.th .c4, .th .c5 { letter-spacing: -.3px; padding-left: 31px; }
.c5 { width: 195px; padding-left: 29px; gap: 6px; letter-spacing: .6px; }
.c6 { width: 200px; padding-left: 30px; }
.th .c6 { padding-left: 31px; }
.al { width: 76px; }
.green { color: #1d8102; }
.grey { color: #687078; }
.ck { width: 21px; height: 21px; border: 1.5px solid #aab7b8; border-radius: 3px; background: #fff; margin-bottom: 4px; }
.ck-mix { background: #0073bb; border: 0; display: flex; align-items: center; justify-content: center; margin: 0; }
.ck-mix::after { content: ""; width: 14px; height: 3px; background: #fff; }
.ck-on { background: #0073bb; border: 0; }
.hsb { height: 26px; background: #f0f0f0; display: flex; align-items: center; padding: 0 9px 1px 8px; }
.hsb i { margin-left: 9px; width: 560px; height: 21px; background: #c1c1c1; }
.hsb svg:last-child { margin-left: auto; }

.split { height: 54px; flex: none; border-top: 2px solid #545b64; background: #f2f3f3; display: flex; justify-content: flex-end; gap: 36px; padding: 18px 33px 0 0; }
.lower { flex: 1; display: flex; background: #f2f3f3; overflow: hidden; }
.panel { margin: 0 21px; width: 1492px; background: #fff; border-left: 1px solid #c8cccc; border-right: 1px solid #c8cccc; display: flex; flex: none; }
.col { position: relative; }
.col1 { width: 501px; padding-left: 31px; }
.col2 { width: 485px; padding-left: 15px; border-left: 1px solid #eaeded; }
.col3 { width: 502px; padding-left: 15px; border-left: 1px solid #eaeded; }
.f1 { height: 113px; }
.f2 { height: 142px; }
.panel label { display: block; height: 30px; line-height: 29px; color: #545b64; letter-spacing: .14px; }
.panel p { height: 30px; margin-top: 8px; display: flex; align-items: center; white-space: nowrap; letter-spacing: .32px; }
.panel p.plain { margin-top: 7px; }
.panel p.cp { margin-top: 14px; padding-left: 11px; gap: 17px; }
.col1 p.cp { padding-left: 12px; }
.panel p.run { margin-top: 6px; gap: 6px; color: #1d8102; }
.panel .num { letter-spacing: .6px; line-height: 30px; }
.panel a { color: #0073bb; }
.panel .vpc { letter-spacing: .55px; }
.panel p .out { margin-left: -10px; }
.tip { position: absolute; left: 75px; top: 285px; width: 309px; height: 63px; background: #fff; border: 1px solid #d5dbdb; border-radius: 3px; box-shadow: 0 1px 4px rgba(0,28,36,.25); display: flex; align-items: center; padding-left: 22px; gap: 5px; color: #1d8102; white-space: nowrap; letter-spacing: .1px; }
.tip-arrow { position: absolute; left: -14px; top: 16px; }

.foot { height: 51px; background: #232f3e; border-top: 1px solid #545b64; display: flex; align-items: center; padding-left: 30px; font-size: 17.5px; color: #d5dbdb; letter-spacing: -.15px; white-space: nowrap; font-weight: 500; }
.fb { width: 114px; }
.lang { display: flex; align-items: center; gap: 11px; width: 678px; letter-spacing: .1px; }
.copyr { width: 620px; font-size: 16.5px; letter-spacing: -.11px; color: #95a5a6; font-weight: 400; }
.pp { width: 149px; }
.tu { width: 144px; }

/* taskbar */
.task { height: 60px; display: flex; background: linear-gradient(90deg, #f0d8e0 0, #eed8df 72px, #f0dad8 600px, #f3e0d4 680px, #f2ded6 900px, #f0dad5 1250px, #e8d2d6 1400px, #e2d1da 1495px, #cbe6ec 1570px, #caeaee 1750px, #d2eaef 1920px); }
.start { width: 72px; padding: 18px 24px; }
.tsearch { width: 516px; border: 2px solid #c9c9c9; background: #fff; display: flex; align-items: center; padding: 2px 0 0 16px; gap: 18px; font-size: 21px; letter-spacing: .07px; color: #2b2b2b; white-space: nowrap; }
.ti { width: 61px; margin-right: 14px; display: flex; align-items: center; justify-content: center; position: relative; flex: none; }
.ti.on { border-bottom: 3px solid #d0632c; padding-top: 3px; }
.cort { width: 72px; margin: 0; }
.tview { width: 72px; margin: 0 10px 0 0; }
.chr { border-image: linear-gradient(90deg, #d0632c 49px, #dda07f 49px) 3; }
.tile { width: 73px; margin: 0 107px 0 -6px; background: rgba(255,255,255,.55); }
.rmt { font: 700 11px "Liberation Sans", sans-serif; fill: #fff; }
.tray { display: flex; align-items: center; position: relative; flex: 1; border-right: 1px solid #9fb4bc; margin-right: 7px; }
.t-chev { margin-left: 13px; }
.t-cloud { margin-left: 15px; }
.t-bat { margin-left: 12px; }
.t-wifi { margin-left: 16px; }
.t-vol { margin-left: 14px; }
.clock { width: 100px; margin-left: 8px; display: flex; flex-direction: column; text-align: center; font-size: 17.5px; line-height: 28px; letter-spacing: -.1px; color: #111; }
.note { margin-left: 20px; position: relative; }
.note b { position: absolute; left: 11px; top: 11px; width: 25px; height: 25px; border-radius: 13px; background: rgba(214,218,220,.92); border: 1px solid #777; font-size: 16px; line-height: 23px; font-weight: 600; text-align: center; }

/* PuTTY window */
.dialog { position: absolute; left: 622px; top: 198px; width: 676px; height: 675px; background: #f0f0f0; box-shadow: 0 5px 22px rgba(0,0,0,.42); font: 16px/20px "Liberation Sans", Arial, sans-serif; letter-spacing: -.1px; color: #000; }
.d-title { height: 44px; background: #fff; display: flex; align-items: center; padding-left: 11px; padding-bottom: 1px; font-family: "Open Sans", sans-serif; }
.d-title > svg:first-child { margin-top: 2px; }
.d-title span { margin-left: 5px; font-size: 17.5px; letter-spacing: -.23px; width: 527px; line-height: 24px; }
.d-title b { font-size: 19px; font-weight: 400; width: 66px; }
.d-cat { height: 33px; padding: 9px 0 0 7px; }
.d-body { display: flex; padding-left: 7px; gap: 11px; height: 547px; }
.tree { width: 214px; border: 1px solid #828790; background: #fff; display: flex; overflow: hidden; padding: 2px 1px 1px 0; }
.tree ul { width: 186px; padding-left: 4px; flex: none; letter-spacing: 0; }
.tree li { height: 22px; display: flex; line-height: 22px; white-space: nowrap; }
.tree li span { padding: 0 2px; }
.tree li .hl { background: #0078d7; color: #fff; padding-right: 3px; }
.tree li i { width: 19px; height: 22px; background-repeat: no-repeat; flex: none; --v: repeating-linear-gradient(#777 0 1px, transparent 1px 2px); --h: repeating-linear-gradient(90deg, #777 0 1px, transparent 1px 2px); }
.tree li i svg { width: 13px; height: 13px; margin: 5px 0 0 3px; }
.tree li .v { background-image: var(--v); background-size: 1px 22px; background-position: 9px 0; }
.tree li .v.h { background-image: var(--v), var(--h); background-size: 1px 22px, 10px 1px; background-position: 9px 0, 9px 12px; }
.tree li .t.h { background-image: var(--v), var(--h); background-size: 1px 12px, 10px 1px; background-position: 9px 0, 9px 12px; }
.tree li .d.h { background-image: var(--v), var(--h); background-size: 1px 10px, 10px 1px; background-position: 9px 12px, 9px 12px; }
.tsb { width: 25px; background: #f0f0f0; display: flex; flex-direction: column; align-items: center; padding: 10px 0 9px; }
.tsb i { width: 25px; margin-top: 6px; height: 421px; background: #cdcdcd; }
.tsb svg:last-child { margin-top: auto; }
.opts { width: 429px; }
.banner { height: 29px; border: 1px solid #a0a0a0; outline: 1px solid #fff; text-align: center; line-height: 29px; letter-spacing: -.12px; }
fieldset { margin: 0; padding: 10px 0 0 15px; border: 1px solid #dcdcdc; min-width: 0; }
legend { height: 20px; line-height: 22px; padding: 0 4px; margin-left: -11px; letter-spacing: -.02px; white-space: nowrap; }
.g1 { margin-top: 8px; height: 142px; }
.g2 { margin-top: 11px; height: 247px; }
.g2 legend { letter-spacing: -.1px; }
.g3 { margin-top: 10px; height: 61px; padding-top: 9px; }
.opts label { display: block; height: 20px; line-height: 22px; }
.pair { display: flex; gap: 6px; }
.host { width: 297px; }
.port { width: 95px; }
.inp { margin-top: 3px; height: 30px; border: 1px solid #7a7a7a; background: #fff; padding: 3px 2px; letter-spacing: 0; }
.inp-s { width: 297px; margin-top: 2px; }
.opts .ct { margin-top: 7px; }
.radios { display: flex; margin-top: 3px; }
.r { width: 81px; display: flex; align-items: center; gap: 4px; white-space: nowrap; letter-spacing: -.22px; line-height: 22px; }
.wide .r { width: 101px; }
.r i { width: 20px; height: 20px; border: 1px solid #333; border-radius: 50%; background: #fff; flex: none; }
.r i.on { background: radial-gradient(circle, #333 0 5px, #fff 5.7px); }
.g2 .pair { margin-top: 8px; gap: 7px; }
.lst { width: 297px; height: 144px; border: 1px solid #828790; background: #fff; padding: 2px 3px; letter-spacing: .12px; }
.btns { padding-top: 1px; display: flex; flex-direction: column; gap: 9px; }
button { font: inherit; letter-spacing: inherit; height: 33px; border: 1px solid #adadad; background: #e1e1e1; padding: 0; margin: 0; width: 122px; color: #000; }
.btns button { width: 93px; }
.btns button:last-child { margin-top: 1px; }
.d-btns { display: flex; padding: 9px 0 0 15px; gap: 8px; }
.d-btns .def { margin-left: 131px; border: 2px solid #0078d7; }
.d-btns .cancel { width: 124px; margin-left: 1px; }
```
